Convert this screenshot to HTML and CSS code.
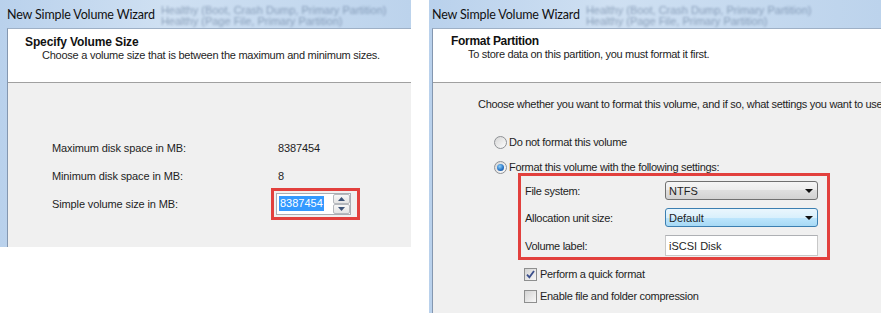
FILE: index.html
```html
<!DOCTYPE html>
<html lang="en">
<head>
  <meta charset="UTF-8">
  <title>New Simple Volume Wizard</title>
  <link rel="stylesheet" href="styles.css">
</head>
<body>
  <div class="shots">
    <section class="wizard wizard-size">
      <div class="titlebar">
        <span class="caption">New Simple Volume Wizard</span>
        <span class="glass">Healthy (Boot, Crash Dump, Primary Partition)<br>Healthy (Page File, Primary Partition)</span>
      </div>
      <div class="panel">
        <div class="head">
          <h1>Specify Volume Size</h1>
          <p>Choose a volume size that is between the maximum and minimum sizes.</p>
        </div>
        <div class="body size-body">
          <div class="size-grid">
            <span>Maximum disk space in MB:</span>
            <span>8387454</span>
            <span>Minimum disk space in MB:</span>
            <span>8</span>
            <span>Simple volume size in MB:</span>
            <div class="mark mark-spin">
              <div class="spin">
                <span class="spin-text"><span class="selected">8387454</span></span>
                <span class="spin-btns">
                  <span class="spin-btn"><svg width="7" height="4" viewBox="0 0 7 4"><path d="M0 4 L3.5 0 L7 4 Z" fill="#3d5478"/></svg></span>
                  <span class="spin-btn"><svg width="7" height="4" viewBox="0 0 7 4"><path d="M0 0 L7 0 L3.5 4 Z" fill="#3d5478"/></svg></span>
                </span>
              </div>
            </div>
          </div>
        </div>
      </div>
    </section>

    <section class="wizard wizard-format">
      <div class="titlebar">
        <span class="caption">New Simple Volume Wizard</span>
        <span class="glass">Healthy (Boot, Crash Dump, Primary Partition)<br>Healthy (Page File, Primary Partition)</span>
      </div>
      <div class="panel">
        <div class="head">
          <h1>Format Partition</h1>
          <p>To store data on this partition, you must format it first.</p>
        </div>
        <div class="body format-body">
          <p class="intro">Choose whether you want to format this volume, and if so, what settings you want to use.</p>
          <div class="options">
            <label class="option"><span class="radio"></span>Do not format this volume</label>
            <label class="option"><span class="radio checked"></span>Format this volume with the following settings:</label>
          </div>
          <div class="mark mark-settings">
            <div class="settings">
              <span>File system:</span>
              <div class="combo">NTFS<svg width="8" height="4" viewBox="0 0 8 4"><path d="M0 0 L8 0 L4 4 Z" fill="#111"/></svg></div>
              <span>Allocation unit size:</span>
              <div class="combo combo-focus">Default<svg width="8" height="4" viewBox="0 0 8 4"><path d="M0 0 L8 0 L4 4 Z" fill="#111"/></svg></div>
              <span>Volume label:</span>
              <div class="textbox">iSCSI Disk</div>
            </div>
          </div>
          <div class="checks">
            <label class="option">
              <span class="check"><svg width="9" height="9" viewBox="0 0 9 9"><path d="M1 4.6 L3.4 7.4 L8 1" fill="none" stroke="#3b4f8c" stroke-width="1.8"/></svg></span>Perform a quick format
            </label>
            <label class="option"><span class="check"></span>Enable file and folder compression</label>
          </div>
        </div>
      </div>
    </section>
  </div>
</body>
</html>
```

FILE: styles.css
```css
* {
  margin: 0;
  padding: 0;
  box-sizing: border-box;
}
body {
  background-color: #fff;
  width: 881px;
  height: 313px;
  overflow: hidden;
  font-family: "Liberation Sans", Arial, sans-serif;
  font-size: 11px;
  color: #1e1e1e;
}
.shots {
  display: flex;
  align-items: flex-start;
}
.wizard {
  display: flex;
  flex-direction: column;
  background: linear-gradient(90deg, #b9d1ec, #cfe0f2 40%, #bcd3ec);
  overflow: hidden;
}
.wizard-size {
  width: 411px;
  height: 247px;
  padding-left: 7px;
  letter-spacing: -.12px;
}
.wizard-format {
  flex: 1;
  height: 313px;
  margin-left: 18px;
  padding-left: 3px;
  letter-spacing: -.3px;
}

/* glass caption */
.titlebar {
  height: 28px;
  display: flex;
  align-items: center;
  white-space: nowrap;
  overflow: hidden;
  flex-shrink: 0;
}
.caption {
  font-family: Lato, "Noto Sans", sans-serif;
  font-size: 12.5px;
  letter-spacing: -.15px;
  color: #111;
  margin-top: 1px;
}
.glass {
  align-self: flex-start;
  margin-left: 6px;
  padding-top: 5px;
  font-size: 11px;
  line-height: 11px;
  letter-spacing: 0;
  color: rgba(60, 85, 120, .45);
  filter: blur(1.3px);
}

.panel {
  flex: 1;
  display: flex;
  flex-direction: column;
  border-left: 1px solid #8497b0;
  border-top: 1px solid #9eb0c6;
  background-color: #f0f0f0;
}
.head {
  height: 54px;
  flex-shrink: 0;
  background-color: #fff;
  border-bottom: 1px solid #a0a0a0;
  padding: 7px 0 0 17px;
}
.head h1 {
  font-size: 12px;
  line-height: 13px;
  font-weight: bold;
  color: #111;
}
.head p {
  line-height: 12px;
  padding-left: 17px;
}
.wizard-size .head p {
  letter-spacing: -.25px;
}
.wizard-format .head {
  padding: 6px 0 0 18px;
}

/* red callouts */
.mark {
  border: 3px solid #e2403d;
}

/* size page */
.size-body {
  padding: 51px 0 0 44px;
}
.size-grid {
  display: grid;
  grid-template-columns: 226px auto;
  grid-auto-rows: 28px;
  align-items: center;
  justify-items: start;
}
.mark-spin {
  margin: -2px 0 -2px -7px;
  padding: 2px 6px 2px 2px;
}
.spin {
  width: 75px;
  height: 22px;
  display: flex;
  justify-content: space-between;
  background-color: #fff;
  border: 1px solid #abadb3;
}
.spin-text {
  padding: 2px 0 0 2px;
  letter-spacing: 0;
}
.selected {
  display: inline-block;
  background-color: #3399ff;
  color: #fff;
  line-height: 15px;
  padding: 0 1px;
}
.spin-btns {
  width: 17px;
  display: flex;
  flex-direction: column;
}
.spin-btn {
  flex: 1;
  display: flex;
  align-items: center;
  justify-content: center;
  border: 1px solid #b5b8bd;
  border-radius: 2px;
  background: linear-gradient(#f7f7f7, #e4e4e4);
}

/* format page */
.format-body {
  padding: 15px 0 0 45px;
  white-space: nowrap;
}
.intro {
  line-height: 13px;
}
.options {
  display: flex;
  flex-direction: column;
  gap: 11px;
  margin: 24px 0 0 16px;
}
.option {
  display: flex;
  align-items: center;
  height: 14px;
}
.radio {
  width: 13px;
  height: 13px;
  margin-right: 2px;
  border-radius: 50%;
  border: 1px solid #8e9195;
  background: linear-gradient(135deg, #d6d6d6, #fdfdfd);
  display: flex;
  align-items: center;
  justify-content: center;
}
.radio.checked::after {
  content: "";
  width: 7px;
  height: 7px;
  border-radius: 50%;
  background: radial-gradient(circle at 40% 35%, #8fd0f8, #2c78c8 55%, #123f86);
}
.mark-settings {
  width: 312px;
  margin: -1px 0 0 40px;
  padding: 5px 9px 1px 4px;
}
.settings {
  display: grid;
  grid-template-columns: 140px 153px;
  grid-template-rows: 19px 19px 21px;
  row-gap: 8px;
  align-items: center;
}
.combo {
  height: 19px;
  display: flex;
  align-items: center;
  justify-content: space-between;
  padding: 0 4px 0 3px;
  border: 1px solid #707070;
  border-radius: 3px;
  background: linear-gradient(#f5f5f5, #ececec 50%, #dedede 50%, #d2d2d2);
  letter-spacing: 0;
}
.combo-focus {
  border-color: #3c7fb1;
  background: linear-gradient(#eaf6fd, #d9f0fc 50%, #bee6fd 50%, #a7d9f5);
}
.textbox {
  height: 21px;
  display: flex;
  align-items: center;
  padding-left: 3px;
  background-color: #fff;
  border: 1px solid #c8c8c8;
  border-top-color: #aeb0b4;
  letter-spacing: 0;
}
.checks {
  display: flex;
  flex-direction: column;
  gap: 8px;
  margin: 7px 0 0 46px;
}
.check {
  width: 13px;
  height: 13px;
  margin-right: 3px;
  border: 1px solid #8e8f8f;
  background: linear-gradient(135deg, #d3d3d3, #f8f8f8);
  display: flex;
  align-items: center;
  justify-content: center;
}
```
